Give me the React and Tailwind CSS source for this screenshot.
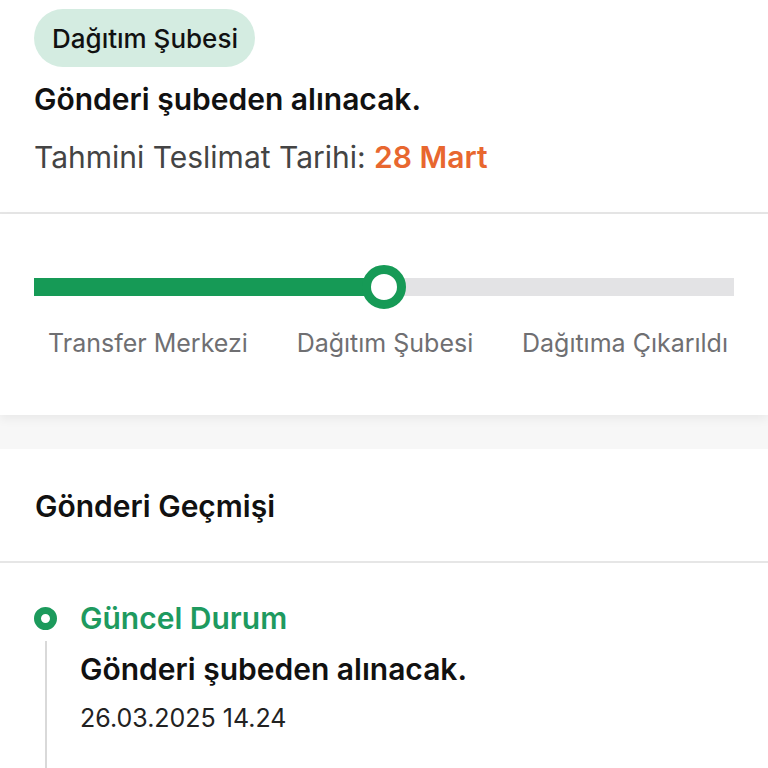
export default function App() {
  return (
    <div className="w-[768px] h-[768px] overflow-hidden bg-white" style={{ fontFamily: "Inter, 'Noto Sans', sans-serif" }}>
      <div className="px-[34px] pt-[9px] pb-[36px]">
        <div className="inline-flex items-center h-[58px] pl-[18px] pr-[17px] rounded-full bg-[#d4ece1] text-[26px] font-medium text-[#111]">Dağıtım Şubesi</div>
        <div className="mt-[13px] text-[30px] font-semibold text-[#111] leading-[38px]">Gönderi şubeden alınacak.</div>
        <div className="mt-[20px] text-[30px] text-[#444] leading-[38px]">
          Tahmini Teslimat Tarihi: <span className="font-semibold text-[#e8672f]">28 Mart</span>
        </div>
      </div>
      <div className="h-[2px] bg-[#e6e6e6]" />
      <div className="relative bg-white shadow-[0_4px_10px_rgba(0,0,0,0.06)] px-[34px] pt-[64px] pb-[56px]">
        <div className="relative h-[18px] bg-[#e3e3e5]">
          <div className="absolute left-0 top-0 h-full w-[350px] bg-[#169a56]" />
          <div className="absolute left-[328px] top-[-13px] w-[44px] h-[44px] rounded-full border-[9px] border-[#169a56] bg-white" />
        </div>
        <div className="mt-[31px] flex justify-between pl-[14px] pr-[6px] text-[25px] text-[#6f6f72] leading-[32px]">
          <span>Transfer Merkezi</span>
          <span>Dağıtım Şubesi</span>
          <span>Dağıtıma Çıkarıldı</span>
        </div>
      </div>
      <div className="h-[34px] bg-[#f7f7f7]" />
      <div className="bg-white">
        <div className="px-[35px] h-[112px] flex items-center pt-[3px] text-[30px] font-semibold text-[#111]">Gönderi Geçmişi</div>
        <div className="h-[2px] bg-[#e6e6e6]" />
        <div className="relative px-[34px] pt-[36px]">
          <div className="absolute left-[45px] top-[78px] bottom-[-200px] w-[2px] bg-[#d9d9d9]" />
          <div className="flex items-center gap-[23px]">
            <div className="w-[23px] h-[23px] rounded-full border-[7px] border-[#1c9a5c] bg-white" />
            <div className="text-[30px] font-semibold text-[#1e9a5f] leading-[38px]">Güncel Durum</div>
          </div>
          <div className="pl-[46px] mt-[13px] text-[30px] font-semibold text-[#111] leading-[38px]">Gönderi şubeden alınacak.</div>
          <div className="pl-[46px] mt-[14px] text-[25px] text-[#222] leading-[32px] pb-[200px]">26.03.2025 14.24</div>
        </div>
      </div>
    </div>
  );
}
